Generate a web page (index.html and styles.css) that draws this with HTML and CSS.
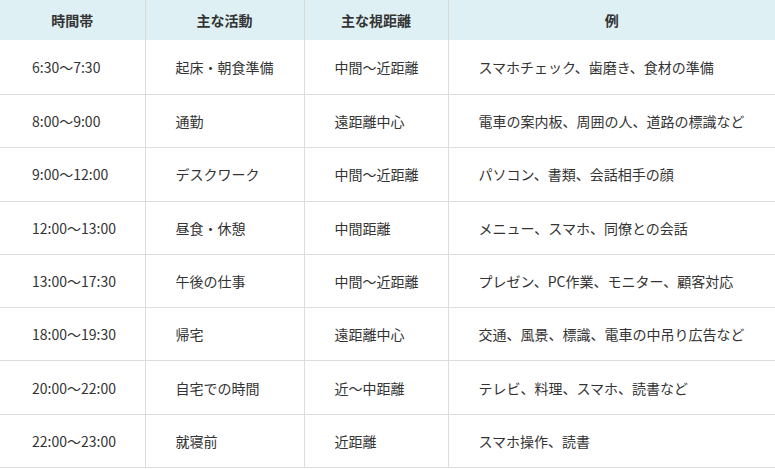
FILE: index.html
```html
<!DOCTYPE html>
<html lang="ja">
<head>
<meta charset="utf-8">
<link rel="stylesheet" href="styles.css">
</head>
<body>
<table class="schedule">
  <colgroup>
    <col class="c1"><col class="c2"><col class="c3"><col class="c4">
  </colgroup>
  <thead>
    <tr><th>時間帯</th><th>主な活動</th><th>主な視距離</th><th>例</th></tr>
  </thead>
  <tbody>
    <tr><td>6:30〜7:30</td><td>起床・朝食準備</td><td>中間〜近距離</td><td>スマホチェック、歯磨き、食材の準備</td></tr>
    <tr><td>8:00〜9:00</td><td>通勤</td><td>遠距離中心</td><td>電車の案内板、周囲の人、道路の標識など</td></tr>
    <tr><td>9:00〜12:00</td><td>デスクワーク</td><td>中間〜近距離</td><td>パソコン、書類、会話相手の顔</td></tr>
    <tr><td>12:00〜13:00</td><td>昼食・休憩</td><td>中間距離</td><td>メニュー、スマホ、同僚との会話</td></tr>
    <tr><td>13:00〜17:30</td><td>午後の仕事</td><td>中間〜近距離</td><td>プレゼン、PC作業、モニター、顧客対応</td></tr>
    <tr><td>18:00〜19:30</td><td>帰宅</td><td>遠距離中心</td><td>交通、風景、標識、電車の中吊り広告など</td></tr>
    <tr><td>20:00〜22:00</td><td>自宅での時間</td><td>近〜中距離</td><td>テレビ、料理、スマホ、読書など</td></tr>
    <tr><td>22:00〜23:00</td><td>就寝前</td><td>近距離</td><td>スマホ操作、読書</td></tr>
  </tbody>
</table>
</body>
</html>
```
FILE: styles.css
```css
html, body {
  margin: 0;
  padding: 0;
  background: #fff;
}
body {
  font-family: "Noto Sans CJK JP", "Noto Sans", sans-serif;
  font-size: 14px;
  color: #333;
}
.schedule {
  width: 775px;
  border-collapse: collapse;
  table-layout: fixed;
}
.c1 { width: 145px; }
.c2 { width: 159px; }
.c3 { width: 144px; }
.c4 { width: 327px; }
.schedule th {
  height: 40px;
  padding: 0;
  background: #dff0f4;
  font-weight: 700;
  text-align: center;
  border-left: 1px solid #d8d8d8;
}
.schedule tbody tr:first-child td {
  height: 54px;
}
.schedule td {
  height: 52.3px;
  padding: 0 0 0 30px;
  text-align: left;
  white-space: nowrap;
  border-left: 1px solid #dddddd;
  border-bottom: 1px solid #dddddd;
}
.schedule th:first-child,
.schedule td:first-child {
  border-left: none;
}
.schedule td:first-child { padding-left: 32px; }
```
